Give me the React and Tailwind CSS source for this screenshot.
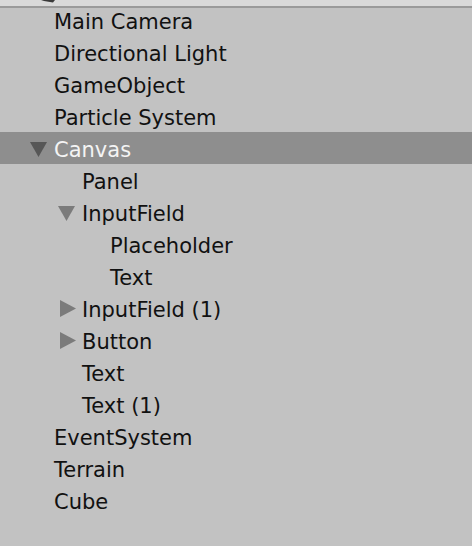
import React from "react";

const items = [
  { name: "Main Camera", depth: 0 },
  { name: "Directional Light", depth: 0 },
  { name: "GameObject", depth: 0 },
  { name: "Particle System", depth: 0 },
  { name: "Canvas", depth: 0, arrow: "down", selected: true },
  { name: "Panel", depth: 1 },
  { name: "InputField", depth: 1, arrow: "down" },
  { name: "Placeholder", depth: 2 },
  { name: "Text", depth: 2 },
  { name: "InputField (1)", depth: 1, arrow: "right" },
  { name: "Button", depth: 1, arrow: "right" },
  { name: "Text", depth: 1 },
  { name: "Text (1)", depth: 1 },
  { name: "EventSystem", depth: 0 },
  { name: "Terrain", depth: 0 },
  { name: "Cube", depth: 0 },
];

const pad = ["pl-[26px]", "pl-[54px]", "pl-[82px]"];

function Arrow({ dir, selected }) {
  const color = selected ? "#575757" : "#7b7b7b";
  if (dir === "down") {
    return (
      <svg width="17" height="15" viewBox="0 0 17 15" className="ml-[4px] mt-[2px]">
        <polygon points="0,0 17,0 8.5,15" fill={color} />
      </svg>
    );
  }
  return (
    <svg width="16" height="17" viewBox="0 0 16 17" className="ml-[6px] mt-[1px]">
      <polygon points="0,0 16,8.5 0,17" fill={color} />
    </svg>
  );
}

export default function App() {
  return (
    <div
      className="w-[472px] h-[546px] overflow-hidden bg-[#c2c2c2] flex flex-col"
      style={{ fontFamily: '"DejaVu Sans", "Lucida Grande", sans-serif' }}
    >
      <div className="h-[6px] bg-[#d9d9d9] flex shrink-0">
        <svg width="14" height="3" viewBox="0 0 14 3" className="ml-[41px]">
          <polygon points="0,0 14,0 12,2.5 3,1" fill="#3a3a3a" />
        </svg>
      </div>
      <div className="h-[2px] bg-[#9a9a9a] shrink-0" />
      <div className="-mt-[4px] flex flex-col">
        {items.map((it, i) => (
          <div
            key={i}
            className={`h-[32px] shrink-0 flex items-center ${pad[it.depth]} ${
              it.selected ? "bg-[#8e8e8e] text-[#f4f4f4]" : "text-[#111111]"
            }`}
          >
            <div className="w-[28px] h-[32px] flex items-center shrink-0">
              {it.arrow && <Arrow dir={it.arrow} selected={it.selected} />}
            </div>
            <div className="h-[32px] pt-[4px] leading-[28px] text-[21px] whitespace-nowrap">
              {it.name}
            </div>
          </div>
        ))}
      </div>
    </div>
  );
}
